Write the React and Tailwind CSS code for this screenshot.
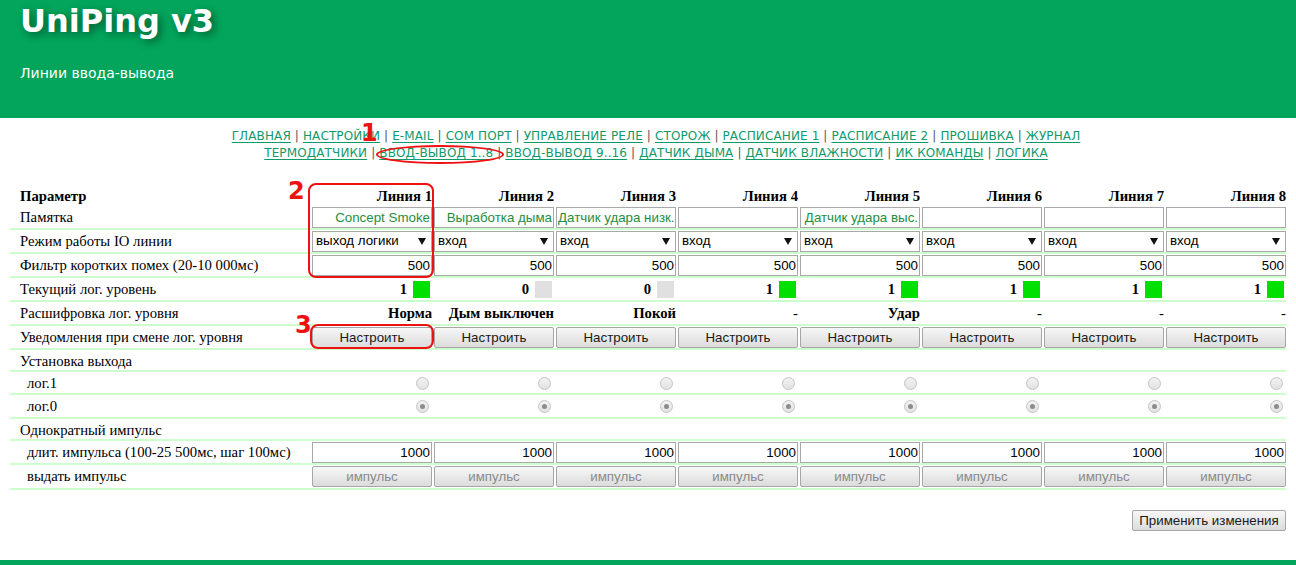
import React from "react";

const serif = "font-['Liberation_Serif',serif]";
const sans = "font-['Liberation_Sans',Arial,sans-serif]";

const navTop = ["ГЛАВНАЯ", "НАСТРОЙКИ", "E-MAIL", "COM ПОРТ", "УПРАВЛЕНИЕ РЕЛЕ", "СТОРОЖ", "РАСПИСАНИЕ 1", "РАСПИСАНИЕ 2", "ПРОШИВКА", "ЖУРНАЛ"];
const navBottom = ["ТЕРМОДАТЧИКИ", "ВВОД-ВЫВОД 1..8", "ВВОД-ВЫВОД 9..16", "ДАТЧИК ДЫМА", "ДАТЧИК ВЛАЖНОСТИ", "ИК КОМАНДЫ", "ЛОГИКА"];

const lines = [
  { memo: "Concept Smoke", mode: "выход логики", level: 1, decode: "Норма" },
  { memo: "Выработка дыма", mode: "вход", level: 0, decode: "Дым выключен" },
  { memo: "Датчик удара низк.", mode: "вход", level: 0, decode: "Покой" },
  { memo: "", mode: "вход", level: 1, decode: "-" },
  { memo: "Датчик удара выс.", mode: "вход", level: 1, decode: "Удар" },
  { memo: "", mode: "вход", level: 1, decode: "-" },
  { memo: "", mode: "вход", level: 1, decode: "-" },
  { memo: "", mode: "вход", level: 1, decode: "-" },
];

const NavLine = ({ items }) => (
  <div className="flex justify-center">
    {items.map((t, i) => (
      <span key={t} className="whitespace-pre">
        <a href="#" className="text-[#12996a] underline underline-offset-[2px]">{t}</a>
        {i < items.length - 1 && <span className="text-[#555]"> | </span>}
      </span>
    ))}
  </div>
);

const Row = ({ label, indent, bold, border = true, h = "h-[24px]", children }) => (
  <div className={`grid grid-cols-[300px_repeat(8,122px)] items-center ${h} ${border ? "border-b-2 border-[#ccffcc]" : ""}`}>
    <div className={`${indent ? "pl-[17px]" : "pl-[10px]"} ${bold ? "font-bold" : ""} whitespace-nowrap`}>{label}</div>
    {children}
  </div>
);

const Cell = ({ children }) => (
  <div className="flex items-center justify-end pl-[2px]">{children}</div>
);

const Field = ({ value, green }) => (
  <input
    readOnly
    value={value}
    className={`w-[120px] h-[21px] border border-[#a9a9a9] px-[1px] text-right text-[13.33px] ${sans} ${green ? "text-[#1e8e3e]" : "text-black"} outline-none`}
  />
);

const Select = ({ value }) => (
  <div className={`w-[120px] h-[21px] border border-[#a9a9a9] bg-white flex items-center justify-between pl-[3px] pr-[5px] text-[13.33px] ${sans} text-black`}>
    <span>{value}</span>
    <svg width="8" height="7" viewBox="0 0 8 7">
      <path d="M0 0H8L4 7Z" fill="#111" />
    </svg>
  </div>
);

const Btn = ({ children, disabled, w = "w-[120px]" }) => (
  <button
    className={`${w} h-[21px] border border-[#a6a6a6] rounded-[2px] bg-gradient-to-b from-[#f7f7f7] to-[#dcdcdc] text-[13.33px] ${sans} ${disabled ? "text-[#8a8a8a]" : "text-[#1a1a1a]"}`}
  >
    {children}
  </button>
);

const Radio = ({ checked }) => (
  <span className="mr-[3px] w-[13px] h-[13px] rounded-full border border-[#c4c4c4] bg-gradient-to-b from-[#f2f2f2] to-[#e2e2e2] flex items-center justify-center">
    {checked && <span className="w-[5px] h-[5px] rounded-full bg-[#8c8c8c]" />}
  </span>
);

export default function App() {
  return (
    <div className={`relative min-h-[565px] bg-white ${serif} text-[14.7px] text-black`}>
      <header className="h-[118px] bg-[#02a55b] pl-[20px] pt-[1px] font-['DejaVu_Sans',sans-serif] text-white">
        <h1 className="text-[32px] font-bold leading-[40px] [text-shadow:3px_3px_8px_rgba(0,0,0,0.45)]">UniPing v3</h1>
        <p className="mt-[22px] text-[14px]">Линии ввода-вывода</p>
      </header>

      <nav className="mt-[10px] pl-[16px] font-['DejaVu_Sans',sans-serif] text-[12px] tracking-[0.12px] leading-[17px]">
        <NavLine items={navTop} />
        <NavLine items={navBottom} />
      </nav>

      <div className="mx-[10px] mt-[23px]">
        <Row label="Параметр" bold border={false} h="h-[21px]">
          {lines.map((_, i) => (
            <div key={i} className="text-right font-bold">Линия {i + 1}</div>
          ))}
        </Row>
        <Row label="Памятка">
          {lines.map((l, i) => (
            <Cell key={i}><Field value={l.memo} green /></Cell>
          ))}
        </Row>
        <Row label="Режим работы IO линии">
          {lines.map((l, i) => (
            <Cell key={i}><Select value={l.mode} /></Cell>
          ))}
        </Row>
        <Row label="Фильтр коротких помех (20-10 000мс)">
          {lines.map((_, i) => (
            <Cell key={i}><Field value="500" /></Cell>
          ))}
        </Row>
        <Row label="Текущий лог. уровень">
          {lines.map((l, i) => (
            <Cell key={i}>
              <span className="font-bold mr-[6px]">{l.level}</span>
              <span className={`w-[17px] h-[17px] mr-[2px] ${l.level ? "bg-[#00e000]" : "bg-[#e0e0e0]"}`} />
            </Cell>
          ))}
        </Row>
        <Row label="Расшифровка лог. уровня">
          {lines.map((l, i) => (
            <div key={i} className={`text-right ${l.decode === "-" ? "" : "font-bold"}`}>{l.decode}</div>
          ))}
        </Row>
        <Row label="Уведомления при смене лог. уровня">
          {lines.map((_, i) => (
            <Cell key={i}><Btn>Настроить</Btn></Cell>
          ))}
        </Row>
        <Row label="Установка выхода" h="h-[22px]" />
        <Row label="лог.1" indent h="h-[23px]">
          {lines.map((_, i) => (
            <Cell key={i}><Radio /></Cell>
          ))}
        </Row>
        <Row label="лог.0" indent>
          {lines.map((_, i) => (
            <Cell key={i}><Radio checked /></Cell>
          ))}
        </Row>
        <Row label="Однократный импульс" h="h-[22px]" />
        <Row label="длит. импульса (100-25 500мс, шаг 100мс)" indent>
          {lines.map((_, i) => (
            <Cell key={i}><Field value="1000" /></Cell>
          ))}
        </Row>
        <Row label="выдать импульс" indent h="h-[25px]">
          {lines.map((_, i) => (
            <Cell key={i}><Btn disabled>импульс</Btn></Cell>
          ))}
        </Row>

        <div className="flex justify-end mt-[20px]">
          <Btn w="w-[154px]">Применить изменения</Btn>
        </div>
      </div>

      <footer className="mt-[29px] h-[30px] bg-[#02a55b]" />

      {/* annotations */}
      <span className="absolute left-[361px] top-[121px] text-[24px] font-bold leading-none text-[#ee1111] font-['DejaVu_Sans',sans-serif]">1</span>
      <span className="absolute left-[376px] top-[145px] w-[128px] h-[19px] rounded-[50%] border-2 border-[#ee1111]" />
      <span className="absolute left-[288px] top-[179px] text-[24px] font-bold leading-none text-[#ee1111] font-['DejaVu_Sans',sans-serif]">2</span>
      <span className="absolute left-[308px] top-[183px] w-[126px] h-[95px] rounded-[8px] border-2 border-[#ee1111]" />
      <span className="absolute left-[295px] top-[313px] text-[24px] font-bold leading-none text-[#ee1111] font-['DejaVu_Sans',sans-serif]">3</span>
      <span className="absolute left-[310px] top-[324px] w-[124px] h-[25px] rounded-[8px] border-2 border-[#ee1111]" />
    </div>
  );
}
